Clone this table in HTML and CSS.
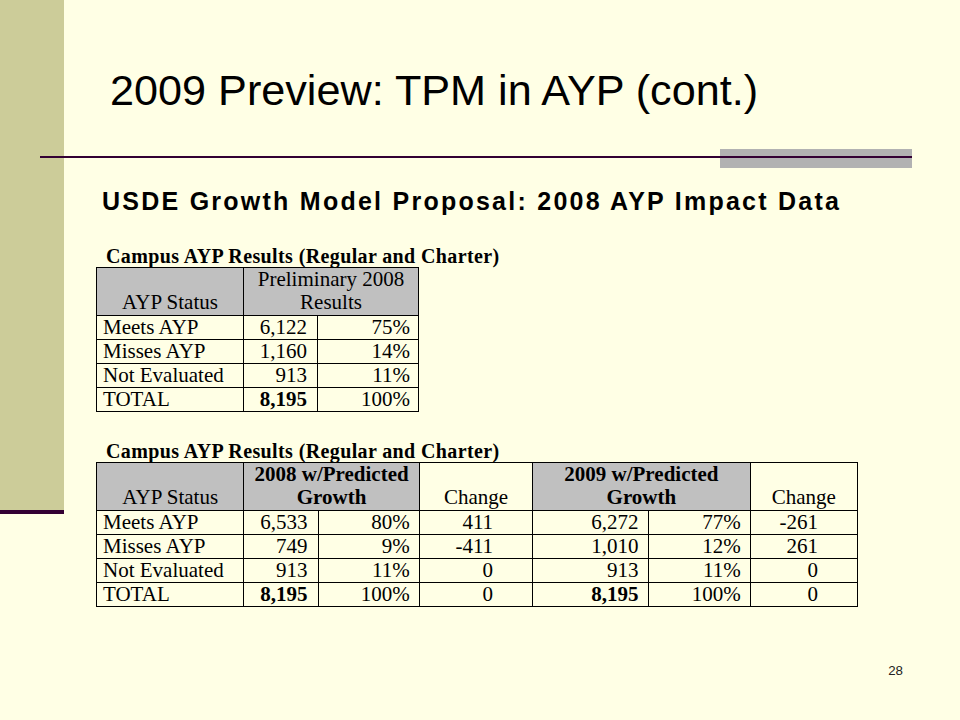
FILE: index.html
```html
<!DOCTYPE html>
<html lang="en">
<head>
<meta charset="utf-8">
<title>2009 Preview: TPM in AYP (cont.)</title>
<link rel="stylesheet" href="styles.css">
</head>
<body>
<div class="slide">
  <div class="sidebar">
    <div class="side-fill"></div>
    <div class="side-bar"></div>
  </div>
  <div class="main">
    <h1 class="title">2009 Preview: TPM in AYP (cont.)</h1>
    <div class="rule"><div class="rule-box"></div></div>
    <h2 class="subtitle">USDE Growth Model Proposal: 2008 AYP Impact Data</h2>

    <div class="caption">Campus AYP Results (Regular and Charter)</div>
    <table class="data t1">
      <colgroup><col class="c-status"><col class="c-num"><col class="c-pct"></colgroup>
      <tr class="head">
        <th class="gray">AYP Status</th>
        <th class="gray" colspan="2">Preliminary 2008<br>Results</th>
      </tr>
      <tr><td class="lbl">Meets AYP</td><td class="num">6,122</td><td class="pct">75%</td></tr>
      <tr><td class="lbl">Misses AYP</td><td class="num">1,160</td><td class="pct">14%</td></tr>
      <tr><td class="lbl">Not Evaluated</td><td class="num">913</td><td class="pct">11%</td></tr>
      <tr><td class="lbl">TOTAL</td><td class="num"><b>8,195</b></td><td class="pct">100%</td></tr>
    </table>

    <div class="caption cap2">Campus AYP Results (Regular and Charter)</div>
    <table class="data t2">
      <colgroup><col class="c-status"><col class="c-num"><col class="c-pct"><col class="c-chg"><col class="c-num2"><col class="c-pct"><col class="c-chg2"></colgroup>
      <tr class="head">
        <th class="gray">AYP Status</th>
        <th class="gray bold" colspan="2">2008 w/Predicted<br>Growth</th>
        <th>Change</th>
        <th class="gray bold" colspan="2">2009 w/Predicted<br>Growth</th>
        <th>Change</th>
      </tr>
      <tr><td class="lbl">Meets AYP</td><td class="num">6,533</td><td class="pct">80%</td><td class="chg">411</td><td class="num">6,272</td><td class="pct">77%</td><td class="chg">-261</td></tr>
      <tr><td class="lbl">Misses AYP</td><td class="num">749</td><td class="pct">9%</td><td class="chg">-411</td><td class="num">1,010</td><td class="pct">12%</td><td class="chg">261</td></tr>
      <tr><td class="lbl">Not Evaluated</td><td class="num">913</td><td class="pct">11%</td><td class="chg">0</td><td class="num">913</td><td class="pct">11%</td><td class="chg">0</td></tr>
      <tr><td class="lbl">TOTAL</td><td class="num"><b>8,195</b></td><td class="pct">100%</td><td class="chg">0</td><td class="num"><b>8,195</b></td><td class="pct">100%</td><td class="chg">0</td></tr>
    </table>

    <div class="page-num">28</div>
  </div>
</div>
</body>
</html>
```

FILE: styles.css
```css
html, body {
  margin: 0;
  padding: 0;
  background: #FFFFE5;
}

.slide {
  display: flex;
  width: 960px;
  height: 720px;
  background: #FFFFE5;
  overflow: hidden;
}

.sidebar {
  width: 64px;
  flex: none;
  display: flex;
  flex-direction: column;
}

.side-fill {
  height: 510px;
  background: #CCCC99;
}

.side-bar {
  height: 4px;
  background: #330033;
}

.main {
  flex: 1;
  display: flex;
  flex-direction: column;
  align-items: flex-start;
}

.title {
  margin: 66px 0 0 46px;
  font-family: "Liberation Sans", Arial, sans-serif;
  font-weight: normal;
  font-size: 43.2px;
  line-height: 48px;
  color: #000;
  white-space: nowrap;
}

.rule {
  margin: 35px 0 0 -24px;
  width: 872px;
  height: 19px;
  display: flex;
  justify-content: flex-end;
  background: linear-gradient(#330033, #330033) 0 7px / 100% 2px no-repeat;
}

.rule-box {
  width: 192px;
  height: 19px;
  background: linear-gradient(#330033, #330033) 0 7px / 100% 2px no-repeat, #B2B2B2;
}

.subtitle {
  margin: 19px 0 0 38px;
  font-family: "Liberation Sans", Arial, sans-serif;
  font-weight: bold;
  font-size: 25px;
  line-height: 28px;
  letter-spacing: 2.25px;
  color: #000;
  white-space: nowrap;
}

.caption {
  margin: 30px 0 0 42px;
  font-family: "Liberation Serif", "Times New Roman", serif;
  font-weight: bold;
  font-size: 20px;
  line-height: 22px;
  letter-spacing: 0.38px;
  color: #000;
  white-space: nowrap;
}

.cap2 {
  margin-top: 28px;
}

.data {
  margin-left: 32px;
  border-collapse: collapse;
  table-layout: fixed;
  font-family: "Liberation Serif", "Times New Roman", serif;
  font-size: 21px;
  color: #000;
}

.t1 { width: 323px; }
.t2 { width: 762px; }

.c-status { width: 147px; }
.c-num { width: 74px; }
.c-pct { width: 101px; }
.c-chg { width: 113px; }
.c-num2 { width: 116px; }
.c-chg2 { width: 107px; }

.data th,
.data td {
  border: 1px solid #000;
  padding: 0;
  white-space: nowrap;
  overflow: hidden;
}

.data th {
  height: 46px;
  font-weight: normal;
  line-height: 23px;
  text-align: center;
  vertical-align: bottom;
  padding-bottom: 1px;
}

.data th.gray {
  background: #C0C0C0;
}

.data th.bold {
  font-weight: bold;
}

.data td {
  height: 23px;
  line-height: 23px;
  vertical-align: middle;
}

.data td.lbl {
  padding-left: 6px;
  text-align: left;
}

.data td.num {
  text-align: right;
  padding-right: 10px;
}

.data td.pct {
  text-align: right;
  padding-right: 8px;
}

.data td.chg {
  text-align: right;
  padding-right: 39px;
}

.t2 td.pct {
  padding-right: 9px;
}

.page-num {
  align-self: flex-end;
  margin: 56px 57px 0 0;
  font-family: "Liberation Sans", Arial, sans-serif;
  font-size: 13.33px;
  line-height: 16px;
  color: #222;
}
```
